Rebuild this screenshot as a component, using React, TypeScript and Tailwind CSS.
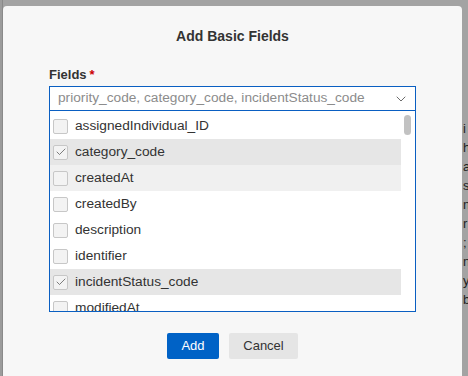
import { Check, ChevronDown } from 'lucide-react';

const fields = [
  { name: 'assignedIndividual_ID', checked: false, tone: '' },
  { name: 'category_code', checked: true, tone: 'bg-[#e6e6e6]' },
  { name: 'createdAt', checked: false, tone: 'bg-[#f0f0f0]' },
  { name: 'createdBy', checked: false, tone: '' },
  { name: 'description', checked: false, tone: '' },
  { name: 'identifier', checked: false, tone: '' },
  { name: 'incidentStatus_code', checked: true, tone: 'bg-[#e6e6e6]' },
  { name: 'modifiedAt', checked: false, tone: '' },
];

const behind = ['', 'i', 'h', 'a', 's', 'n', 'r', ';', 'n', 'y', 'b'];

export default function App() {
  return (
    <div className="relative h-[376px] w-[468px] overflow-hidden bg-[#a3a3a3] font-['Liberation_Sans',Arial,sans-serif] text-[#333]">
      {/* page behind the overlay */}
      <div className="flex h-full">
        <div className="w-[3px] border-r border-[#8a8a8a] bg-[#9c9c9c]" />
        <div className="flex-1" />
        <div className="flex w-[6px] flex-col pt-[100px] text-[13px] leading-[19px] text-[#222]">
          {behind.map((c, i) => (
            <span key={i} className="h-[19px] overflow-hidden pl-[1px]">{c}</span>
          ))}
        </div>
      </div>

      <div className="absolute left-[3px] top-[6px] h-[380px] w-[459px] rounded-[4px] bg-[#f7f7f7]">
        <h2 className="pt-[21px] text-center text-[14px] font-bold leading-[18px] text-[#333]">Add Basic Fields</h2>

        <div className="mt-[22px] px-[46px]">
          <div className="flex items-center text-[13px] font-bold leading-[16px] text-[#333]">
            Fields <span className="ml-[3px] text-[#cc0000]">*</span>
          </div>

          <div className="mt-[3px] flex h-[25px] items-center justify-between border border-[#0a5fc2] bg-white pl-[8px] pr-[6px]">
            <span className="text-[13.7px] text-[#8c8c8c]">priority_code, category_code, incidentStatus_code</span>
            <ChevronDown className="h-[16px] w-[16px] text-[#555]" strokeWidth={1.3} />
          </div>

          <div className="relative h-[201px] overflow-hidden border-x border-b border-[#0a5fc2] bg-white pt-[2px]">
            <div className="mr-[14px]">
              {fields.map((f) => (
                <div key={f.name} className={`flex h-[26px] items-center gap-[7px] pl-[3px] ${f.tone}`}>
                  <span className="flex h-[15px] w-[15px] items-center justify-center rounded-[2px] border border-[#c7c7c7] bg-[#f3f3f3]">
                    {f.checked && <Check className="h-[12px] w-[12px] text-[#555]" strokeWidth={1.5} />}
                  </span>
                  <span className="text-[13.7px] text-[#333]">{f.name}</span>
                </div>
              ))}
            </div>
            <div className="absolute right-[4px] top-[4px] h-[20px] w-[7px] rounded-full bg-[#c2c2c2]" />
          </div>
        </div>

        <div className="mt-[21px] flex justify-center gap-[10px]">
          <button className="h-[26px] w-[52px] rounded-[2px] bg-[#0062c6] text-[13px] text-white">Add</button>
          <button className="h-[26px] w-[69px] rounded-[2px] bg-[#e5e5e5] text-[13px] text-[#333]">Cancel</button>
        </div>
      </div>
    </div>
  );
}
